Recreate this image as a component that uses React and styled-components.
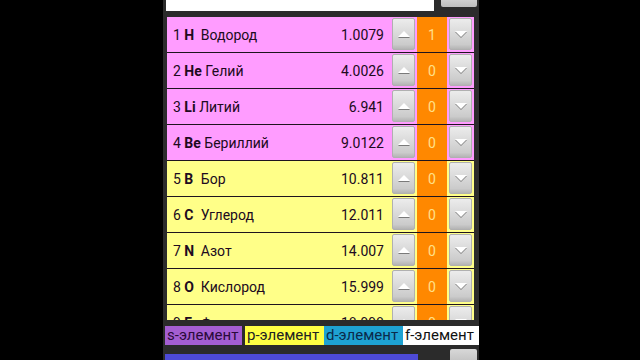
import React from "react";
import styled, { createGlobalStyle } from "styled-components";

const Global = createGlobalStyle`
  html, body { margin: 0; padding: 0; background: #000; }
  body { font-family: Roboto, "Noto Sans", sans-serif; }
`;

const Screen = styled.div`
  width: 640px;
  height: 360px;
  display: flex;
  justify-content: flex-start;
  background: #000;
  overflow: hidden;
`;

const Panel = styled.div`
  margin-left: 163px;
  width: 316px;
  height: 360px;
  background: #2b2b2b;
  display: flex;
  flex-direction: column;
  overflow: hidden;
`;

const TopBar = styled.div`
  height: 11px;
  display: flex;
  align-items: flex-start;
  padding-left: 3px;
`;

const Input = styled.div`
  width: 268px;
  height: 11px;
  background: #fff;
`;

const TopButton = styled.div`
  margin-left: 7px;
  width: 36px;
  height: 7px;
  background: linear-gradient(#cfcfcf, #bdbdbd);
  border-radius: 0 0 2px 2px;
`;

const List = styled.div`
  margin-top: 6px;
  margin-left: 4px;
  width: 307px;
  height: 303px;
  overflow: hidden;
  flex-shrink: 0;
`;

const Row = styled.div`
  height: 35px;
  border-bottom: 1px solid #1e141e;
  background: ${p => (p.$kind === "s" ? "#ff9cff" : "#ffff88")};
  display: flex;
  align-items: center;
  padding-left: 6px;
  padding-right: 2px;
  color: #200a20;
  font-size: 14px;
`;

const Info = styled.div`
  flex: 1;
  white-space: nowrap;
`;

const Sym = styled.b`
  font-weight: 700;
  display: inline-block;
  min-width: ${p => p.$w}px;
`;

const Weight = styled.div`
  margin-right: 8px;
  text-align: right;
`;

const Stepper = styled.div`
  display: flex;
  align-items: stretch;
  height: 35px;
`;

const ArrowBtn = styled.div`
  width: 23px;
  height: 32px;
  margin-top: 1px;
  box-sizing: border-box;
  border-radius: 2px;
  background: linear-gradient(#ececec, #cbcbcb 85%, #b4b4b4);
  border: 1px solid #b0b0b0;
  display: flex;
  align-items: center;
  justify-content: center;
`;

const Count = styled.div`
  width: 30px;
  margin: 0 2px;
  background: #ff8800;
  color: #ffe08a;
  display: flex;
  align-items: center;
  justify-content: center;
  font-size: 14px;
`;

const Legend = styled.div`
  margin-top: 6px;
  margin-left: 2px;
  display: flex;
  height: 19px;
  font-size: 15px;
  line-height: 19px;
`;

const LegendItem = styled.div`
  width: ${p => p.$w}px;
  margin-left: ${p => p.$ml || 0}px;
  background: ${p => p.$bg};
  color: ${p => p.$fg};
  padding-left: 2px;
  box-sizing: border-box;
  white-space: nowrap;
  overflow: hidden;
`;

const Bottom = styled.div`
  margin-top: 4px;
  display: flex;
  align-items: flex-start;
  padding-left: 2px;
`;

const BlueBar = styled.div`
  width: 253px;
  height: 10px;
  margin-top: 5px;
  background: #4d4ad6;
`;

const BottomButton = styled.div`
  margin-left: 32px;
  width: 27px;
  height: 12px;
  border-radius: 2px 2px 0 0;
  background: linear-gradient(#d8d8d8, #c4c4c4);
`;

const Arrow = ({ up }) => (
  <svg width="14" height="10" viewBox="0 0 14 10">
    {up ? (
      <>
        <polygon points="1,9 7,3 13,9" fill="#7a7a7a" />
        <polygon points="1,8 7,2 13,8" fill="#fff" />
      </>
    ) : (
      <>
        <polygon points="1,3 7,9 13,3" fill="#7a7a7a" />
        <polygon points="1,2 7,8 13,2" fill="#fff" />
      </>
    )}
  </svg>
);

const elements = [
  [1, "H", "Водород", "1.0079", "s", 1],
  [2, "He", "Гелий", "4.0026", "s", 0],
  [3, "Li", "Литий", "6.941", "s", 0],
  [4, "Be", "Бериллий", "9.0122", "s", 0],
  [5, "B", "Бор", "10.811", "p", 0],
  [6, "C", "Углерод", "12.011", "p", 0],
  [7, "N", "Азот", "14.007", "p", 0],
  [8, "O", "Кислород", "15.999", "p", 0],
  [9, "F", "Фтор", "18.998", "p", 0],
];

export default function App() {
  return (
    <Screen>
      <Global />
      <Panel>
        <TopBar>
          <Input />
          <TopButton />
        </TopBar>
        <List>
          {elements.map(([n, sym, name, w, kind, c]) => (
            <Row key={n} $kind={kind}>
              <Info>
                {n}{" "}
                <Sym $w={sym.length === 1 ? 13 : 0}>{sym}</Sym> {name}
              </Info>
              <Weight>{w}</Weight>
              <Stepper>
                <ArrowBtn><Arrow up /></ArrowBtn>
                <Count>{c}</Count>
                <ArrowBtn><Arrow /></ArrowBtn>
              </Stepper>
            </Row>
          ))}
        </List>
        <Legend>
          <LegendItem $w={77} $bg="#a45ed2" $fg="#2a0b3a">s-элемент</LegendItem>
          <LegendItem $w={79} $ml={3} $bg="#ffff44" $fg="#222">p-элемент</LegendItem>
          <LegendItem $w={79} $bg="#1ea2d2" $fg="#0b2a4a">d-элемент</LegendItem>
          <LegendItem $w={76} $bg="#ffffff" $fg="#111">f-элемент</LegendItem>
        </Legend>
        <Bottom>
          <BlueBar />
          <BottomButton />
        </Bottom>
      </Panel>
    </Screen>
  );
}
